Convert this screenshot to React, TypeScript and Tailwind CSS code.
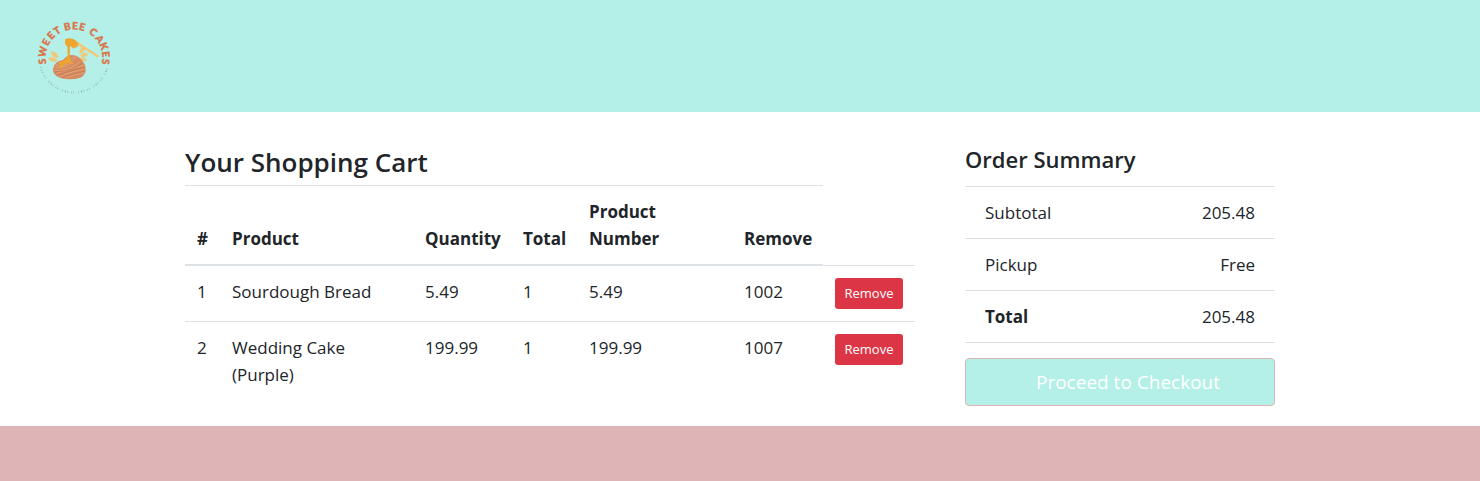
type CartItem = {
  id: number;
  name: string;
  quantity: string;
  total: string;
  productNumber: string;
  code: string;
};

const items: CartItem[] = [
  { id: 1, name: "Sourdough Bread", quantity: "5.49", total: "1", productNumber: "5.49", code: "1002" },
  { id: 2, name: "Wedding Cake (Purple)", quantity: "199.99", total: "1", productNumber: "199.99", code: "1007" },
];

const summary = [
  { label: "Subtotal", value: "205.48", strong: false },
  { label: "Pickup", value: "Free", strong: false },
  { label: "Total", value: "205.48", strong: true },
];

// Each letter of the round lettering with its angle from twelve o'clock.
const ring: [string, number][] = [
  ["S", -97], ["W", -79], ["E", -61], ["E", -46], ["T", -32],
  ["B", -12], ["E", 2], ["E", 15],
  ["C", 37], ["A", 54], ["K", 69], ["E", 84], ["S", 97],
];

function Logo() {
  return (
    <svg viewBox="0 0 270 285" className="h-[95px] w-[90px]" role="img" aria-label="Sweet Bee Cakes">
      <g
        fill="#d9754c"
        stroke="#d9754c"
        strokeWidth="1.2"
        fontFamily="Lato, sans-serif"
        fontWeight="900"
        fontSize="30"
        textAnchor="middle"
      >
        {ring.map(([letter, angle], i) => (
          <text key={i} x="132" y="58" transform={`rotate(${angle} 132 143)`}>
            {letter}
          </text>
        ))}
      </g>
      <path
        d="M32 172 A104 104 0 0 0 232 172"
        fill="none"
        stroke="#7fa69b"
        strokeWidth="6"
        strokeDasharray="2 6 3 5 2 9 2 5 2 13"
        opacity="0.75"
      />
      <g fill="#efc878">
        <path d="M84 145 Q62 142 63 123 Q86 126 84 145Z" />
        <path d="M83 153 Q64 160 54 145 Q72 135 83 153Z" />
        <path d="M148 131 Q146 113 164 107 Q170 127 148 131Z" />
        <path d="M150 137 Q158 123 175 132 Q166 147 150 137Z" />
        <path d="M149 143 Q163 139 170 152 Q154 158 149 143Z" />
      </g>
      <path d="M69 176 Q74 153 99 150 Q116 129 138 137 Q157 146 166 168 Q172 194 151 203 Q119 213 89 203 Q68 195 69 176Z" fill="#d68b62" />
      <g fill="none" stroke="#e5a775" strokeWidth="2.5" strokeLinecap="round">
        <path d="M77 172 Q110 180 137 143" />
        <path d="M76 181 Q120 184 150 155" />
        <path d="M80 190 Q122 175 162 166" />
        <path d="M88 199 Q125 184 165 177" />
        <path d="M105 204 Q135 194 163 188" />
        <path d="M78 165 Q100 170 116 158" />
        <path d="M112 148 Q125 148 135 141" />
      </g>
      <g fill="none" stroke="#bd704e" strokeWidth="1.5">
        <path d="M75 186 Q125 183 157 160" />
        <path d="M83 196 Q125 180 165 171" />
        <path d="M98 203 Q130 190 164 183" />
      </g>
      <path d="M144 101 L202 138" stroke="#f0c878" strokeWidth="8" strokeLinecap="round" />
      <path d="M119 105 L146 96 L144 110 L130 116Z" fill="#e6b260" />
      <path
        d="M106 87 Q124 80 139 92 Q145 102 138 109 Q128 114 120 109 L119 143 Q121 151 128 158 Q132 164 125 163 L115 156 Q111 165 105 160 Q99 172 92 174 Q86 176 89 168 Q97 161 87 161 Q83 157 92 155 Q110 151 113 137 L112 109 Q102 104 106 87Z"
        fill="#eda72f"
      />
    </svg>
  );
}

export default function App() {
  return (
    <div className="bg-white font-['Open_Sans','Noto_Sans',sans-serif] text-[17px] leading-[27px] text-[#212529]">
      <header className="bg-[#b4f0e7] px-[30px] pt-[10px] pb-[7px]">
        <a href="#" className="block w-fit">
          <Logo />
        </a>
      </header>

      <main className="mx-auto flex max-w-[1140px] gap-[50px] px-[15px] pt-8 pb-5">
        <section className="min-w-0 flex-1">
          <h1 className="mb-1 text-[26px] leading-[37px] font-semibold">Your Shopping Cart</h1>
          <table className="w-full table-fixed border-collapse text-left">
            <colgroup>
              <col className="w-[35px]" />
              <col className="w-[193px]" />
              <col className="w-[98px]" />
              <col className="w-[66px]" />
              <col className="w-[155px]" />
              <col className="w-[91px]" />
              <col className="w-[92px]" />
            </colgroup>
            <thead>
              <tr className="align-bottom">
                {["#", "Product", "Quantity", "Total", "Product Number", "Remove"].map((title) => (
                  <th key={title} scope="col" className="border-t border-b-2 border-[#dee2e6] p-3 font-bold">
                    {title}
                  </th>
                ))}
              </tr>
            </thead>
            <tbody>
              {items.map((item) => (
                <tr key={item.id} className="border-t border-[#dee2e6] align-top">
                  <td className="py-3 pl-3">{item.id}</td>
                  <td className="p-3">{item.name}</td>
                  <td className="p-3">{item.quantity}</td>
                  <td className="p-3">{item.total}</td>
                  <td className="p-3">{item.productNumber}</td>
                  <td className="p-3">{item.code}</td>
                  <td className="p-3">
                    <button
                      type="button"
                      aria-label={`Remove ${item.name}`}
                      className="block h-[31px] w-full rounded-[3px] bg-[#dc3545] text-[13px] leading-[21px] text-white"
                    >
                      Remove
                    </button>
                  </td>
                </tr>
              ))}
            </tbody>
          </table>
        </section>

        <aside className="mr-5 w-[310px] shrink-0">
          <h2 className="mb-3 text-[22px] leading-[30px] font-semibold">Order Summary</h2>
          <dl className="border-t border-[#dfdfdf]">
            {summary.map((row) => (
              <div key={row.label} className="flex justify-between border-b border-[#dfdfdf] px-5 py-3">
                <dt className={row.strong ? "font-bold" : ""}>{row.label}</dt>
                <dd>{row.value}</dd>
              </div>
            ))}
          </dl>
          <button
            type="button"
            className="mt-[15px] h-12 w-full rounded border border-[#deb4b6] bg-[#b4f0e7] pl-4 text-[19px] text-white"
          >
            Proceed to Checkout
          </button>
        </aside>
      </main>

      <footer className="h-[55px] bg-[#deb4b6]" />
    </div>
  );
}
